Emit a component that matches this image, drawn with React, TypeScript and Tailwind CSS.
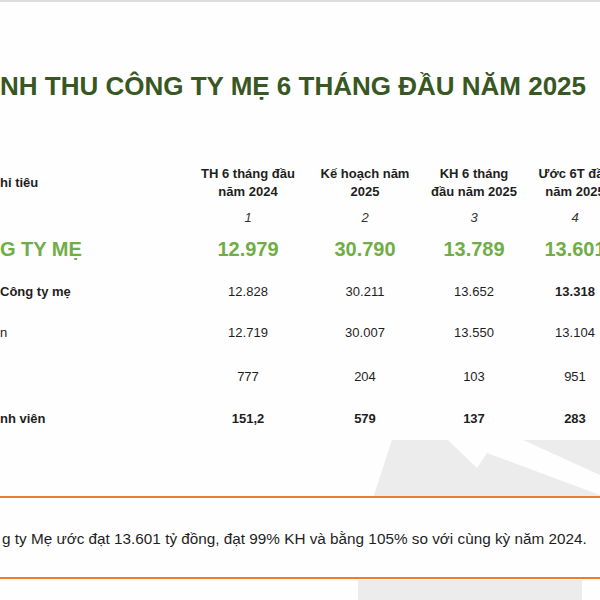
import React from "react";

const cols = "grid grid-cols-[193px_110px_124px_94px_108px] w-[629px]";

function Row({
  h,
  label,
  labelClass,
  cells,
  cellClass,
}: {
  h: string;
  label: string;
  labelClass: string;
  cells: string[];
  cellClass: string;
}) {
  return (
    <div className={`${cols} ${h} items-center`}>
      <div className={`whitespace-nowrap ${labelClass}`}>{label}</div>
      {cells.map((c, i) => (
        <div key={i} className={`text-center whitespace-nowrap ${cellClass}`}>
          {c}
        </div>
      ))}
    </div>
  );
}

export default function App() {
  return (
    <div
      className="relative w-[600px] h-[600px] overflow-hidden bg-[#fefefe] text-[#1e1e1e]"
      style={{ fontFamily: '"Liberation Sans", Arial, sans-serif' }}
    >
      <svg
        className="absolute inset-0 z-0"
        width="600"
        height="600"
        viewBox="0 0 600 600"
      >
        <polygon
          points="392,440 448,440 477,468 487,453 600,495 600,498 373,498"
          fill="#ececec"
        />
        <polygon points="523,440 600,440 600,475" fill="#ececec" />
        <rect x="358" y="580" width="224" height="20" fill="#ececec" />
      </svg>

      <div className="relative z-10 flex flex-col">
        <div className="h-[2px] bg-[#dcdcdc]" />

        <div className="mt-[69px] h-[30px] leading-[30px] text-[26px] font-bold text-[#385723] whitespace-nowrap">
          NH THU CÔNG TY MẸ 6 THÁNG ĐẦU NĂM 2025
        </div>

        <div className="mt-[59px] flex flex-col text-[13px]">
          <div className={`${cols} h-[46px] items-center font-bold leading-[18px]`}>
            <div className="whitespace-nowrap">hỉ tiêu</div>
            <div className="text-center">
              TH 6 tháng đầu
              <br />
              năm 2024
            </div>
            <div className="text-center">
              Kế hoạch năm
              <br />
              2025
            </div>
            <div className="text-center">
              KH 6 tháng
              <br />
              đầu năm 2025
            </div>
            <div className="text-center whitespace-nowrap">
              Ước 6T đầu
              <br />
              năm 2025
            </div>
          </div>

          <Row
            h="h-[24px]"
            label=""
            labelClass=""
            cells={["1", "2", "3", "4"]}
            cellClass="italic text-[#333]"
          />
          <Row
            h="h-[38px]"
            label="G TY MẸ"
            labelClass="text-[20px] font-bold text-[#70ad47]"
            cells={["12.979", "30.790", "13.789", "13.601"]}
            cellClass="text-[20px] font-bold text-[#70ad47]"
          />
          <div className={`${cols} h-[48px] items-center`}>
            <div className="whitespace-nowrap font-bold">Công ty mẹ</div>
            <div className="text-center">12.828</div>
            <div className="text-center">30.211</div>
            <div className="text-center">13.652</div>
            <div className="text-center font-bold">13.318</div>
          </div>
          <Row
            h="h-[34px]"
            label="n"
            labelClass=""
            cells={["12.719", "30.007", "13.550", "13.104"]}
            cellClass=""
          />
          <Row
            h="h-[54px]"
            label=""
            labelClass=""
            cells={["777", "204", "103", "951"]}
            cellClass=""
          />
          <Row
            h="h-[30px]"
            label="nh viên"
            labelClass="font-bold"
            cells={["151,2", "579", "137", "283"]}
            cellClass="font-bold"
          />
        </div>

        <div className="mt-[62px] h-[83px] border-y-2 border-[#ec7c30] bg-[#fefefe] flex items-center pt-[3px]">
          <div className="pl-[2px] text-[15.3px] whitespace-nowrap">
            g ty Mẹ ước đạt 13.601 tỷ đồng, đạt 99% KH và bằng 105% so với cùng kỳ năm 2024.
          </div>
        </div>
      </div>
    </div>
  );
}
